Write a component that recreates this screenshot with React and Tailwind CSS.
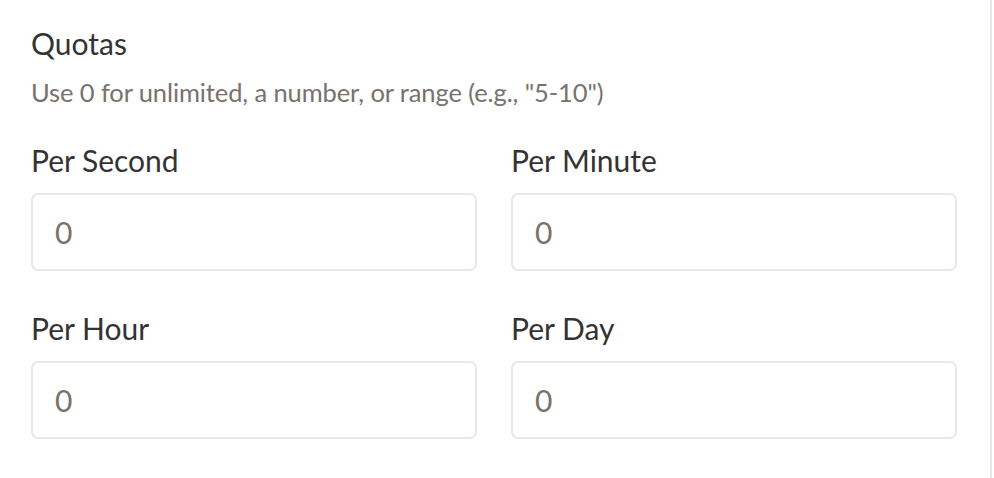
import { useState } from 'react';

const FIELDS = [
  { key: 'second', label: 'Per Second' },
  { key: 'minute', label: 'Per Minute' },
  { key: 'hour', label: 'Per Hour' },
  { key: 'day', label: 'Per Day' },
];

function QuotaField({ label, value, onChange }) {
  return (
    <label className="block">
      <span className="block text-[30px] leading-[36px] text-[#333333] mb-[15px]">{label}</span>
      <input
        type="text"
        value={value}
        onChange={(e) => onChange(e.target.value)}
        className="block w-full h-[78px] px-[22px] rounded-[7px] border-2 border-[#e8e8e8] bg-white text-[30px] text-[#78716c] outline-none focus:border-[#d6d3d1]"
      />
    </label>
  );
}

export default function App() {
  const [quotas, setQuotas] = useState({ second: '0', minute: '0', hour: '0', day: '0' });

  return (
    <div className="min-h-screen bg-white" style={{ fontFamily: 'Lato, "Noto Sans", sans-serif' }}>
      <div className="w-[992px] min-h-[478px] border-r-2 border-[#e8e8e8] pt-[25px] pl-[31px] pr-[33px]">
        <h3 className="text-[30px] leading-[36px] text-[#333333]">Quotas</h3>
        <p className="mt-[15px] text-[25.5px] leading-[32px] tracking-[-0.1px] text-[#78716c]">
          Use 0 for unlimited, a number, or range (e.g., "5-10")
        </p>

        <div className="mt-[34px] grid grid-cols-2 gap-x-[34px] gap-y-[39px]">
          {FIELDS.map((f) => (
            <QuotaField
              key={f.key}
              label={f.label}
              value={quotas[f.key]}
              onChange={(v) => setQuotas({ ...quotas, [f.key]: v })}
            />
          ))}
        </div>
      </div>
    </div>
  );
}
